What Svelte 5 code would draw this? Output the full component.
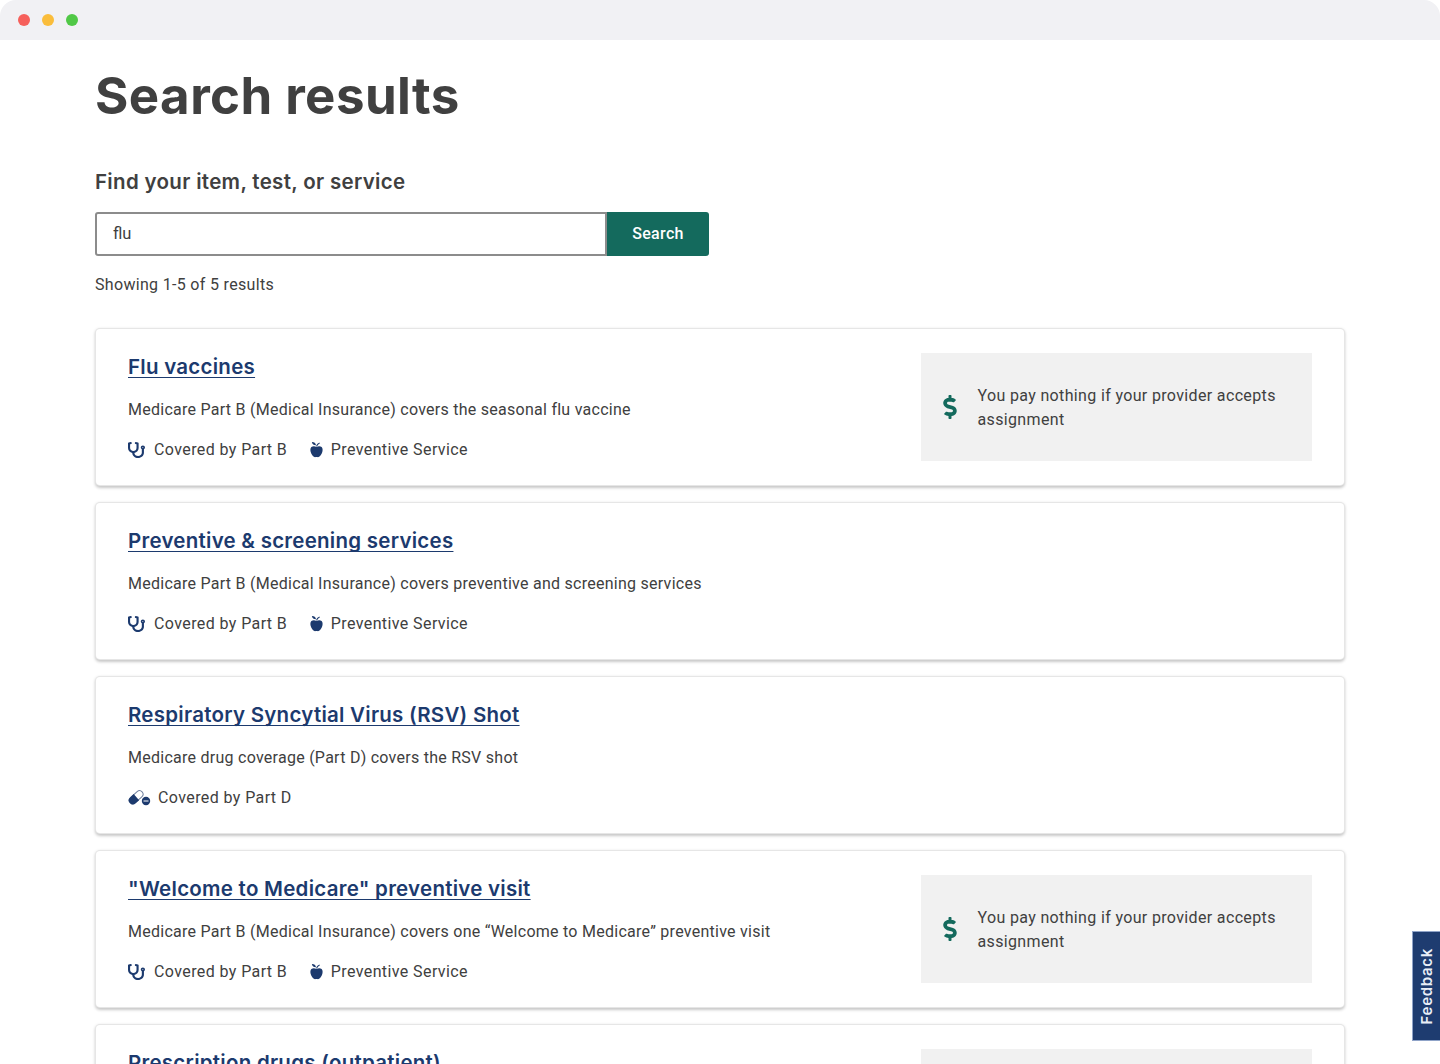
<script>
  const payNothing = 'You pay nothing if your provider accepts assignment';
  const partB = { icon: 'stethoscope', text: 'Covered by Part B' };
  const partD = { icon: 'pills', text: 'Covered by Part D' };
  const preventive = { icon: 'apple', text: 'Preventive Service' };

  const results = [
    {
      title: 'Flu vaccines',
      text: 'Medicare Part B (Medical Insurance) covers the seasonal flu vaccine',
      tags: [partB, preventive],
      cost: payNothing
    },
    {
      title: 'Preventive & screening services',
      text: 'Medicare Part B (Medical Insurance) covers preventive and screening services',
      tags: [partB, preventive]
    },
    {
      title: 'Respiratory Syncytial Virus (RSV) Shot',
      text: 'Medicare drug coverage (Part D) covers the RSV shot',
      tags: [partD]
    },
    {
      title: '"Welcome to Medicare" preventive visit',
      text: 'Medicare Part B (Medical Insurance) covers one “Welcome to Medicare” preventive visit',
      tags: [partB, preventive],
      cost: payNothing
    },
    {
      title: 'Prescription drugs (outpatient)',
      text: '',
      tags: [],
      cost: payNothing
    }
  ];

  let query = $state('flu');
</script>

<div class="window">
  <header class="titlebar">
    <span class="dot red"></span>
    <span class="dot yellow"></span>
    <span class="dot green"></span>
  </header>

  <main>
    <h1>Search results</h1>
    <label for="query">Find your item, test, or service</label>
    <form class="search" onsubmit={(e) => e.preventDefault()}>
      <input id="query" type="text" bind:value={query} />
      <button type="submit">Search</button>
    </form>
    <p class="count">Showing 1-5 of 5 results</p>

    <div class="results">
      {#each results as result}
        <article class="card">
          <div class="info">
            <h2><a href="#top">{result.title}</a></h2>
            <p class="desc">{result.text}</p>
            <div class="tags">
              {#each result.tags as tag}
                <span class="tag">
                  {#if tag.icon === 'stethoscope'}
                    <svg class="icon steth" viewBox="0 0 512 512" preserveAspectRatio="none">
                      <path d="M447.1 112c-34.2.5-62.3 28.4-63 62.6-.5 24.3 12.5 45.6 32 56.8V344c0 57.3-50.2 104-112 104-60 0-109.2-44.1-111.9-99.2C265 333.8 320 269.2 320 192V36.6c0-11.4-8.1-21.3-19.3-23.5L237.8.5c-13-2.6-25.6 5.8-28.2 18.8L206.4 35c-2.6 13 5.8 25.6 18.8 28.2l30.7 6.1v121.4c0 52.9-42.2 96.7-95.1 97.2-53.4.5-96.9-42.7-96.9-96V69.4l30.7-6.1c13-2.6 21.4-15.2 18.8-28.2l-3.1-15.7C107.7 6.4 95.1-2 82.1.6L19.3 13C8.1 15.3 0 25.1 0 36.6V192c0 77.3 55.1 142 128.1 156.8C130.7 439.2 208.6 512 304 512c97 0 176-75.4 176-168V231.4c19.1-11.1 32-31.7 32-55.4 0-35.7-29.2-64.5-64.9-64zm.9 80c-8.8 0-16-7.2-16-16s7.2-16 16-16 16 7.2 16 16-7.2 16-16 16z" />
                    </svg>
                  {:else if tag.icon === 'apple'}
                    <svg class="icon apple" viewBox="0 0 13 17">
                      <path d="M6.5 5.9C8 5 10.2 4.8 11.6 5.9c1.2 1.2 1.2 3.2.7 5-.6 2-1.8 3.9-3.2 4.9-.9.6-1.7.2-2.6.2s-1.7.4-2.6-.2C2.5 14.8 1.3 12.9.7 10.9.2 9.1.2 7.1 1.4 5.9 2.8 4.8 5 5 6.5 5.9z" />
                      <path d="M1.9 1C3.8.8 5.6 1.9 6 4.2 3.9 4.3 2.3 3.2 1.9 1z" />
                      <path class="stem" d="M6.5 5.4C6.9 3.6 7.8 2.5 9.6 1.9" />
                    </svg>
                  {:else}
                    <svg class="icon pills" viewBox="0 0 23 17">
                      <g transform="rotate(-42 8 8.5)">
                        <rect class="shell" x="0.1" y="4.9" width="16.2" height="7" rx="3.5" />
                        <path d="M8.5 4.4H3.9a4.1 4.1 0 0 0 0 8.2H8.5z" />
                      </g>
                      <circle class="halo" cx="18" cy="12" r="5" />
                      <circle cx="18" cy="12" r="4.2" />
                      <path class="score" d="M15.5 12h5" />
                    </svg>
                  {/if}
                  <span>{tag.text}</span>
                </span>
              {/each}
            </div>
          </div>
          {#if result.cost}
            <aside class="cost">
              <svg class="dollar" viewBox="0 0 288 512">
                <path d="M209.2 233.4l-108-31.6C88.7 198.2 80 186.5 80 173.5c0-16.3 13.2-29.5 29.5-29.5h66.3c12.2 0 24.2 3.7 34.2 10.5 6.1 4.1 14.3 3.1 19.5-2l34.8-34c7.1-6.9 6.1-18.4-1.8-24.5C238 74.8 207.4 64.1 176 64V16c0-8.8-7.2-16-16-16h-32c-8.8 0-16 7.2-16 16v48h-2.5C45.8 64-5.4 118.7.5 183.6c4.2 46.1 39.4 83.6 83.8 96.6l102.5 30c12.5 3.7 21.2 15.3 21.2 28.3 0 16.3-13.2 29.5-29.5 29.5h-66.3C100 368 88 364.3 78 357.5c-6.1-4.1-14.3-3.1-19.5 2l-34.8 34c-7.1 6.9-6.1 18.4 1.8 24.5 24.5 19.2 55.1 29.9 86.5 30v48c0 8.8 7.2 16 16 16h32c8.8 0 16-7.2 16-16v-48.2c46.6-.9 90.3-28.6 105.7-72.7 21.5-61.6-14.6-124.8-72.5-141.7z" />
              </svg>
              <p>{result.cost}</p>
            </aside>
          {/if}
        </article>
      {/each}
    </div>
  </main>

  <button class="feedback" type="button"><span>Feedback</span></button>
</div>

<style>
  :global(body) {
    margin: 0;
    overflow: hidden;
    background: #fff;
  }

  .window {
    box-sizing: border-box;
    position: relative;
    height: 1064px;
    overflow: hidden;
    background: #fff;
    color: #404040;
    font: 16px/24px Roboto, 'Liberation Sans', sans-serif;
    letter-spacing: 0.3px;
  }

  .titlebar {
    display: flex;
    align-items: center;
    gap: 12px;
    height: 40px;
    padding-left: 18px;
    border-radius: 16px 16px 0 0;
    background: #f1f1f4;
  }

  .dot {
    width: 12px;
    height: 12px;
    border-radius: 50%;
  }
  .red { background: #f6605b; }
  .yellow { background: #fabd3b; }
  .green { background: #50c846; }

  main {
    padding: 24px 95px 0;
  }

  h1,
  h2,
  p {
    margin: 0;
  }

  h1,
  h2,
  label {
    font-family: Inter, 'Open Sans', sans-serif;
  }

  h1 {
    font-size: 51px;
    font-weight: 700;
    line-height: 64px;
    letter-spacing: 0.42px;
  }

  label {
    display: block;
    margin-top: 42px;
    font-size: 20.5px;
    font-weight: 600;
    line-height: 24px;
    letter-spacing: 0.32px;
  }

  .search {
    display: flex;
    width: 614px;
    height: 44px;
    margin-top: 18px;
  }

  input {
    box-sizing: border-box;
    width: 512px;
    padding: 0 16px;
    border: 2px solid #8c8c8c;
    border-radius: 3px 0 0 3px;
    outline: 0;
    background: #fff;
    color: #404040;
    font: inherit;
    font-size: 16.5px;
    letter-spacing: 0;
  }

  .search button {
    flex: 1;
    padding: 0;
    border: 0;
    border-radius: 0 3px 3px 0;
    background: #146a5d;
    color: #fff;
    font: 500 16px/24px Roboto, sans-serif;
    letter-spacing: 0.35px;
  }

  .count {
    margin-top: 17px;
    letter-spacing: 0.32px;
  }

  .results {
    display: flex;
    flex-direction: column;
    gap: 18px;
    margin-top: 32px;
  }

  .card {
    box-sizing: border-box;
    display: flex;
    justify-content: space-between;
    flex-shrink: 0;
    height: 156px;
    margin: 0 1px;
    padding: 24px 32px;
    border-radius: 4px;
    background: #fff;
    box-shadow: 0 0 0 1px #e6e6e6, 0 1.5px 3px 1px rgba(0, 0, 0, 0.22);
  }

  h2 {
    font-size: 20.5px;
    font-weight: 600;
    line-height: 28px;
    letter-spacing: 0.26px;
    white-space: nowrap;
  }

  h2 a {
    color: #1c3a6e;
    text-decoration: underline;
    text-decoration-thickness: 1px;
    text-decoration-skip-ink: none;
    text-underline-offset: 3px;
  }

  .desc {
    margin-top: 16.7px;
    letter-spacing: 0.26px;
  }

  .tags {
    display: flex;
    gap: 23px;
    margin-top: 16px;
    letter-spacing: 0.4px;
  }

  .tag {
    display: flex;
    align-items: center;
  }

  .icon {
    fill: #1c3a6e;
  }

  .steth {
    width: 17px;
    height: 16px;
    margin-right: 9px;
  }

  .apple {
    width: 13px;
    height: 17px;
    margin-right: 7.5px;
  }

  .stem {
    fill: none;
    stroke: #1c3a6e;
    stroke-width: 1.1;
  }

  .pills {
    width: 23px;
    height: 17px;
    margin-right: 7px;
  }

  .shell {
    fill: #fff;
    stroke: #70809f;
    stroke-width: 1;
  }

  .halo {
    fill: #fff;
  }

  .score {
    stroke: #fff;
    stroke-width: 1;
  }

  .cost {
    box-sizing: border-box;
    display: flex;
    align-items: center;
    width: 391px;
    height: 108px;
    padding: 0 24px 0 22px;
    background: #f1f1f1;
    letter-spacing: 0.35px;
  }

  .cost p {
    padding-top: 1px;
  }

  .dollar {
    flex: none;
    width: 14px;
    height: 24px;
    margin-right: 20.5px;
    fill: #146a5d;
  }

  .feedback {
    position: absolute;
    top: 931px;
    right: 0;
    display: flex;
    align-items: center;
    justify-content: center;
    box-sizing: border-box;
    width: 28px;
    height: 110px;
    padding: 0;
    border: 1px solid #8fa3c8;
    border-right: 0;
    background: #1e3c70;
    color: #e9eef7;
    font: 600 15px/20px Inter, sans-serif;
    letter-spacing: 0.7px;
  }

  .feedback span {
    writing-mode: vertical-rl;
    transform: rotate(180deg);
  }
</style>
